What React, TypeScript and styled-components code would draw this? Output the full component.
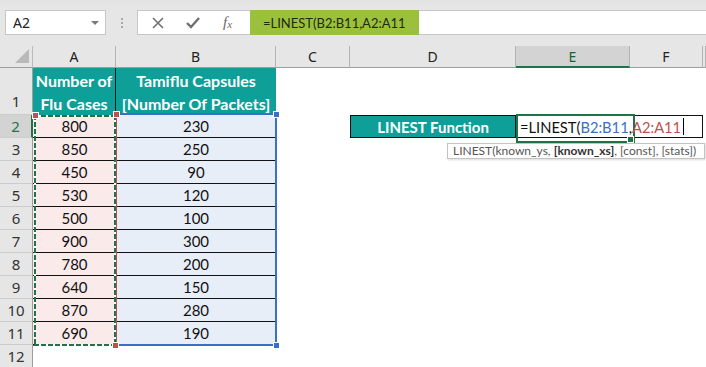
import React from 'react';
import styled, { createGlobalStyle } from 'styled-components';

const GlobalStyle = createGlobalStyle`
  html, body { margin: 0; padding: 0; background: #fff; }
  body { width: 706px; height: 367px; overflow: hidden; font-family: Lato, 'Liberation Sans', sans-serif; }
  * { box-sizing: border-box; }
`;

const GREEN = '#217346';
const TEAL = '#0e9f99';
const RED = '#c0504d';
const BLUE = '#3a6fc6';

const Page = styled.div`
  width: 706px;
  height: 367px;
  overflow: hidden;
  display: flex;
  flex-direction: column;
  background: #fff;
`;

const TopBar = styled.div`
  flex: none;
  height: 46px;
  padding-top: 10px;
  display: flex;
  align-items: flex-start;
  background: linear-gradient(#e2e2e2, #e6e6e6 8px);
`;

const NameBox = styled.div`
  margin-left: 5px;
  width: 101px;
  height: 25px;
  border: 1px solid #c6c6c6;
  background: #fff;
  display: flex;
  align-items: center;
  justify-content: space-between;
  padding: 0 6px 0 7px;
  font-family: 'Noto Sans', sans-serif;
  font-size: 14px;
  color: #222;
`;

const Caret = styled.span`
  width: 0;
  height: 0;
  border-left: 4px solid transparent;
  border-right: 4px solid transparent;
  border-top: 4px solid #7a7a7a;
`;

const Grip = styled.div`
  margin: 8px 14px 0 15px;
  display: flex;
  flex-direction: column;
  gap: 2px;
  span {
    width: 2px;
    height: 2px;
    background: #a9a9a9;
  }
`;

const FormulaBar = styled.div`
  flex: 1;
  height: 25px;
  display: flex;
  border-top: 1px solid #c6c6c6;
  border-bottom: 1px solid #c6c6c6;
  background: #fff;
`;

const IconArea = styled.div`
  width: 113px;
  border-left: 1px solid #c6c6c6;
  display: flex;
  align-items: center;
  padding-left: 14px;
  gap: 22px;
  color: #707070;
`;

const Fx = styled.span`
  font-family: 'Liberation Serif', serif;
  font-style: italic;
  font-size: 15px;
  color: #6a6a6a;
  margin-left: 1px;
  sub {
    font-size: 11px;
    vertical-align: -1px;
  }
`;

const FormulaText = styled.div`
  width: 169px;
  margin-top: -1px;
  margin-bottom: -1px;
  background: #9bc13c;
  display: flex;
  align-items: center;
  padding-left: 13px;
  font-size: 13px;
  color: #1f2a10;
`;

const Sheet = styled.div`
  position: relative;
  display: grid;
  grid-template-columns: 33px 83px 160px 74px 166px 114px 73px 3px;
  grid-template-rows: 22px 47px repeat(11, 23px);
`;

const Corner = styled.div`
  background: #e6e6e6;
  border-right: 1px solid #bcbcbc;
  border-bottom: 1px solid #9e9e9e;
  display: flex;
  align-items: flex-end;
  justify-content: flex-end;
  padding: 0 3px 4px 0;
  &::after {
    content: '';
    width: 0;
    height: 0;
    border-left: 14px solid transparent;
    border-bottom: 14px solid #b9b9b9;
  }
`;

const ColHead = styled.div<{ $active?: boolean }>`
  background: ${(p) => (p.$active ? '#d3d3d3' : '#e6e6e6')};
  border-right: 1px solid #b4b4b4;
  border-bottom: ${(p) => (p.$active ? `2px solid ${GREEN}` : '1px solid #9e9e9e')};
  display: flex;
  align-items: center;
  justify-content: center;
  font-family: 'Noto Sans', sans-serif;
  font-size: 14px;
  color: ${(p) => (p.$active ? '#1d5e3a' : '#222')};
`;

const RowHead = styled.div<{ $active?: boolean; $tall?: boolean }>`
  background: ${(p) => (p.$active ? '#d3d3d3' : '#e6e6e6')};
  border-right: ${(p) => (p.$active ? `2px solid ${GREEN}` : '1px solid #9e9e9e')};
  border-bottom: 1px solid #cdcdcd;
  display: flex;
  align-items: ${(p) => (p.$tall ? 'flex-end' : 'center')};
  justify-content: center;
  padding-bottom: ${(p) => (p.$tall ? '2px' : '0')};
  line-height: 21px;
  font-family: 'Noto Sans', sans-serif;
  font-size: 15px;
  color: ${(p) => (p.$active ? GREEN : '#333')};
`;

const HeadCell = styled.div<{ $divider?: boolean }>`
  background: ${TEAL};
  border-right: ${(p) => (p.$divider ? '1px solid #111' : 'none')};
  display: flex;
  flex-direction: column;
  align-items: center;
  justify-content: center;
  font-weight: 700;
  font-size: 16px;
  line-height: 23px;
  color: #fff;
`;

const DataCell = styled.div<{ $tone: 'red' | 'blue' }>`
  background: ${(p) => (p.$tone === 'red' ? '#fbeaea' : '#e8eef8')};
  border-bottom: 1px solid #111;
  display: flex;
  align-items: center;
  justify-content: center;
  font-size: 15px;
  color: #111;
`;

const Blank = styled.div``;

const FnLabel = styled.div`
  background: ${TEAL};
  border: 1px solid #111;
  display: flex;
  align-items: center;
  justify-content: center;
  font-weight: 700;
  font-size: 15px;
  color: #fff;
`;

const EditCell = styled.div`
  grid-column: span 2;
  position: relative;
  border: 1px solid #111;
  background: #fff;
  display: flex;
  align-items: center;
  padding-left: 3px;
  font-size: 14.7px;
  color: #111;
  &::before {
    content: '';
    position: absolute;
    left: -1px;
    top: -2px;
    width: 115px;
    height: 25px;
    border: 2px solid ${GREEN};
  }
  &::after {
    content: '';
    position: absolute;
    left: 110px;
    top: 20px;
    width: 5px;
    height: 5px;
    background: ${GREEN};
    border: 1px solid #fff;
  }
`;

const EditText = styled.span`
  position: relative;
  z-index: 1;
  white-space: pre;
`;

const Ref = styled.span<{ $c: string }>`
  color: ${(p) => p.$c};
`;

const TextCursor = styled.span`
  width: 1px;
  height: 17px;
  margin-left: 2px;
  background: #000;
`;

const RefRange = styled.div`
  position: absolute;
  left: 33px;
  top: 67px;
  width: 84px;
  height: 233px;
  border: 1px solid ${RED};
  border-left: none;
  pointer-events: none;
`;

const Ants = styled.div`
  position: absolute;
  left: 34px;
  top: 69px;
  width: 82px;
  height: 231px;
  background:
    repeating-linear-gradient(90deg, ${GREEN} 0 5px, #fff 5px 7px) top / 100% 2px no-repeat,
    repeating-linear-gradient(90deg, ${GREEN} 0 5px, #fff 5px 7px) bottom / 100% 2px no-repeat,
    repeating-linear-gradient(180deg, ${GREEN} 0 5px, #fff 5px 7px) left / 2px 100% no-repeat,
    repeating-linear-gradient(180deg, ${GREEN} 0 5px, #fff 5px 7px) right / 2px 100% no-repeat;
  pointer-events: none;
`;

const BlueRange = styled.div`
  position: absolute;
  left: 117px;
  top: 67px;
  width: 160px;
  height: 233px;
  border: 2px solid ${BLUE};
  border-left: none;
  pointer-events: none;
`;

const Handle = styled.div<{ $c: string; $x: number; $y: number }>`
  position: absolute;
  left: ${(p) => p.$x}px;
  top: ${(p) => p.$y}px;
  width: 7px;
  height: 7px;
  background: ${(p) => p.$c};
  border: 1px solid #fff;
`;

const Tooltip = styled.div`
  position: absolute;
  left: 447px;
  top: 97px;
  width: 258px;
  height: 16px;
  border: 1px solid #c3c3c3;
  background: #fff;
  box-shadow: 1px 1px 2px rgba(0, 0, 0, 0.15);
  padding-left: 5px;
  font-size: 12px;
  line-height: 14px;
  color: #555;
  white-space: nowrap;
  b {
    color: #333;
  }
`;

const cols = ['A', 'B', 'C', 'D', 'E', 'F'];
const rows = [
  [800, 230],
  [850, 250],
  [450, 90],
  [530, 120],
  [500, 100],
  [900, 300],
  [780, 200],
  [640, 150],
  [870, 280],
  [690, 190],
];

const CrossIcon = () => (
  <svg width="12" height="12" viewBox="0 0 12 12">
    <path d="M1 1 L11 11 M11 1 L1 11" stroke="#707070" strokeWidth="1.6" />
  </svg>
);

const CheckIcon = () => (
  <svg width="14" height="12" viewBox="0 0 14 12">
    <path d="M1 6 L5 10 L13 1" stroke="#707070" strokeWidth="2.4" fill="none" />
  </svg>
);

const App = () => (
  <Page>
    <GlobalStyle />
    <TopBar>
      <NameBox>
        A2
        <Caret />
      </NameBox>
      <Grip>
        <span />
        <span />
        <span />
      </Grip>
      <FormulaBar>
        <IconArea>
          <CrossIcon />
          <CheckIcon />
          <Fx>
            f<sub>x</sub>
          </Fx>
        </IconArea>
        <FormulaText>=LINEST(B2:B11,A2:A11</FormulaText>
      </FormulaBar>
    </TopBar>

    <Sheet>
      <Corner />
      {cols.map((c) => (
        <ColHead key={c} $active={c === 'E'}>
          {c}
        </ColHead>
      ))}
      <ColHead />

      <RowHead $tall>1</RowHead>
      <HeadCell $divider>
        <span>Number of</span>
        <span>Flu Cases</span>
      </HeadCell>
      <HeadCell>
        <span>Tamiflu Capsules</span>
        <span>[Number Of Packets]</span>
      </HeadCell>
      <Blank />
      <Blank />
      <Blank />
      <Blank />
      <Blank />

      {rows.map(([a, b], i) => (
        <React.Fragment key={i}>
          <RowHead $active={i === 0}>{i + 2}</RowHead>
          <DataCell $tone="red">{a}</DataCell>
          <DataCell $tone="blue">{b}</DataCell>
          <Blank />
          {i === 0 ? (
            <>
              <FnLabel>LINEST Function</FnLabel>
              <EditCell>
                <EditText>
                  =LINEST(<Ref $c={BLUE}>B2:B11</Ref>,<Ref $c={RED}>A2:A11</Ref>
                </EditText>
                <TextCursor />
              </EditCell>
              <Blank />
            </>
          ) : (
            <>
              <Blank />
              <Blank />
              <Blank />
              <Blank />
            </>
          )}
        </React.Fragment>
      ))}

      <RowHead>12</RowHead>

      <RefRange />
      <BlueRange />
      <Ants />
      <Handle $c={RED} $x={32} $y={66} />
      <Handle $c={RED} $x={113} $y={65} />
      <Handle $c={RED} $x={112} $y={296} />
      <Handle $c={BLUE} $x={273} $y={65} />
      <Handle $c={BLUE} $x={273} $y={296} />

      <Tooltip>
        <span>LINEST(known_ys, </span>
        <b>[known_xs]</b>
        <span>, [const], [stats])</span>
      </Tooltip>
    </Sheet>
  </Page>
);

export default App;
